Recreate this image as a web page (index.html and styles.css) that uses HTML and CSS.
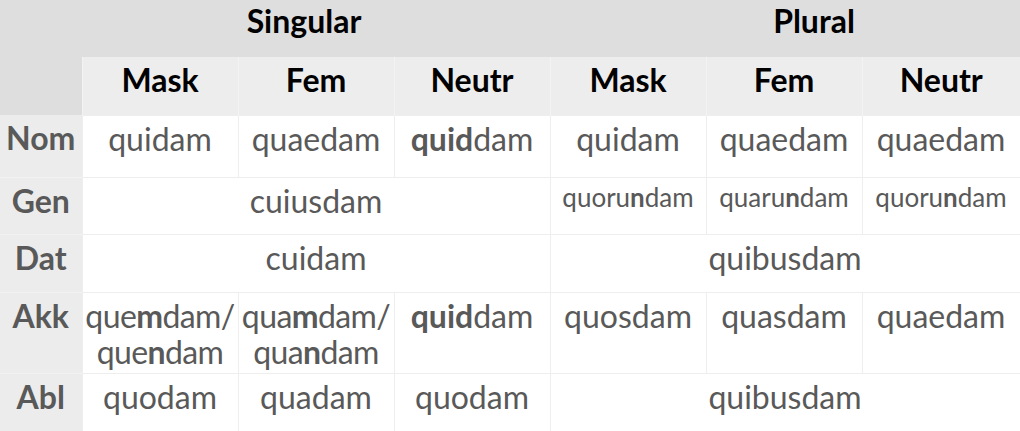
FILE: index.html
```html
<!DOCTYPE html>
<html lang="de">
<head>
<meta charset="utf-8">
<title>quidam</title>
<link rel="stylesheet" href="styles.css">
</head>
<body>
<table class="decl">
  <colgroup>
    <col class="c-label">
    <col class="c-form"><col class="c-form"><col class="c-form">
    <col class="c-form"><col class="c-form"><col class="c-last">
  </colgroup>
  <thead>
    <tr class="h1">
      <th class="corner" rowspan="2"></th>
      <th class="num num-sg" colspan="3">Singular</th>
      <th class="num num-pl" colspan="3">Plural</th>
    </tr>
    <tr class="h2">
      <th class="gen">Mask</th><th class="gen">Fem</th><th class="gen">Neutr</th>
      <th class="gen">Mask</th><th class="gen">Fem</th><th class="gen">Neutr</th>
    </tr>
  </thead>
  <tbody>
    <tr class="r-nom">
      <th class="case">Nom</th>
      <td>quidam</td><td>quaedam</td><td><b>quid</b>dam</td>
      <td>quidam</td><td>quaedam</td><td>quaedam</td>
    </tr>
    <tr class="r-gen">
      <th class="case">Gen</th>
      <td colspan="3">cuiusdam</td>
      <td class="small">quoru<b>n</b>dam</td><td class="small">quaru<b>n</b>dam</td><td class="small">quoru<b>n</b>dam</td>
    </tr>
    <tr class="r-dat">
      <th class="case">Dat</th>
      <td colspan="3">cuidam</td>
      <td colspan="3">quibusdam</td>
    </tr>
    <tr class="r-akk">
      <th class="case">Akk</th>
      <td class="pair">que<b>m</b>dam/<br>que<b>n</b>dam</td><td class="pair">qua<b>m</b>dam/<br>qua<b>n</b>dam</td><td><b>quid</b>dam</td>
      <td>quosdam</td><td>quasdam</td><td>quaedam</td>
    </tr>
    <tr class="r-abl">
      <th class="case">Abl</th>
      <td>quodam</td><td>quadam</td><td>quodam</td>
      <td colspan="3">quibusdam</td>
    </tr>
  </tbody>
</table>
</body>
</html>
```

FILE: styles.css
```css
html, body {
  margin: 0;
  padding: 0;
  background: #ffffff;
}

.decl {
  width: 1020px;
  table-layout: fixed;
  border-collapse: collapse;
  font-family: Lato, "Open Sans", sans-serif;
  font-size: 32px;
  line-height: 36px;
  color: #595959;
}

.c-label { width: 82px; }
.c-form { width: 156px; }
.c-last { width: 158px; }

.decl th,
.decl td {
  padding: 0;
  text-align: center;
  vertical-align: top;
  white-space: nowrap;
}

.decl b { font-weight: 700; }

.h1 { height: 57px; }
.h2 { height: 58px; }

.decl .corner { background: #dedede; }

.decl .num {
  background: #dedede;
  color: #000000;
  font-weight: 700;
  padding-top: 3px;
}

.decl .num-sg { padding-right: 24px; }
.decl .num-pl { padding-left: 58px; }

.decl .gen {
  background: #ededed;
  color: #000000;
  font-weight: 700;
  border-left: 1px solid #f3f3f3;
  padding-top: 5px;
}

.decl tbody td {
  border: 1px solid #eeeeee;
  padding-top: 5px;
}

.decl .case {
  background: #ececec;
  color: #595959;
  font-weight: 700;
  border-bottom: 1px solid #f2f2f2;
  padding-top: 5px;
}

.r-nom { height: 62px; }
.r-gen { height: 57px; }
.r-dat { height: 58px; }
.r-akk { height: 81px; }
.r-abl { height: 58px; }

.decl tbody td.small {
  font-size: 26px;
  padding-top: 1px;
}

.decl tbody td.pair {
  letter-spacing: -0.6px;
}
```
